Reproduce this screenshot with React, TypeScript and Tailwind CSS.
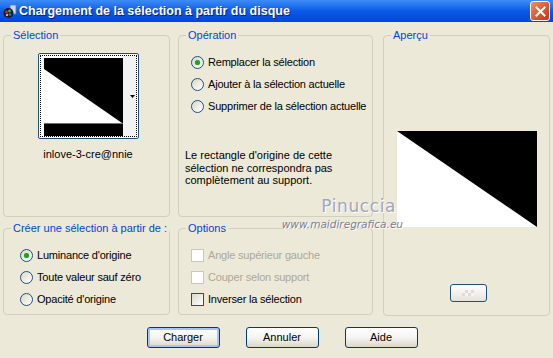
import React from "react";

const font = { fontFamily: '"Liberation Sans", Arial, sans-serif' };

function Radio({ checked, label }: { checked?: boolean; label: string }) {
  return (
    <div className="flex items-center h-[22px] gap-[4px]">
      <div className="w-[13px] h-[13px] rounded-full border border-[#1c5180] bg-linear-to-br from-[#dcd9c9] to-white flex items-center justify-center shrink-0">
        {checked && <div className="w-[5px] h-[5px] rounded-full bg-[#21a121] shadow-[0_0_1px_#5fd35f]" />}
      </div>
      <span className="text-[11px] text-black leading-[13px] tracking-[-0.2px] whitespace-nowrap">{label}</span>
    </div>
  );
}

function Check({ disabled, label }: { disabled?: boolean; label: string }) {
  return (
    <div className="flex items-center h-[22px] gap-[4px]">
      <div
        className={
          disabled
            ? "w-[13px] h-[13px] border border-[#cac8bb] bg-white shrink-0"
            : "w-[13px] h-[13px] border border-[#1c5180] bg-linear-to-br from-[#dcd9c9] to-white shrink-0"
        }
      />
      <span className={`text-[11px] leading-[13px] tracking-[-0.2px] whitespace-nowrap ${disabled ? "text-[#aca899]" : "text-black"}`}>
        {label}
      </span>
    </div>
  );
}

function Group({ title, className, children }: { title: string; className: string; children?: React.ReactNode }) {
  return (
    <fieldset className={`border border-[#d0d0bf] rounded-[4px] min-w-0 ${className}`}>
      <legend className="ml-[7px] px-[2px] text-[11px] leading-[14px] text-[#0046d5] whitespace-nowrap">{title}</legend>
      {children}
    </fieldset>
  );
}

function Btn({ label, def }: { label: string; def?: boolean }) {
  return (
    <button
      className={`w-[73px] h-[21px] rounded-[3px] border border-[#003c74] bg-linear-to-b from-white via-[#f4f4f0] to-[#dcd7cb] text-[11px] text-black ${
        def ? "shadow-[inset_0_0_0_2px_#a9c4f3]" : ""
      }`}
    >
      {label}
    </button>
  );
}

export default function App() {
  return (
    <div className="w-[553px] h-[358px] bg-[#ece9d8] relative overflow-hidden" style={font}>
      {/* title bar */}
      <div className="h-[22px] flex items-center bg-linear-to-b from-[#3d8cf7] via-[#0a5ae6] to-[#0046d8] pl-[2px] pr-[3px]">
        <svg width="15" height="15" viewBox="0 0 15 15" className="shrink-0">
          <rect x="8" y="1" width="6" height="9" fill="#c8d8f0" stroke="#5a78a8" strokeWidth="0.8" />
          <circle cx="6.5" cy="9" r="5" fill="#1a1a2a" />
          <circle cx="4.5" cy="8" r="1.4" fill="#e02020" />
          <circle cx="7.5" cy="7" r="1.4" fill="#20c040" />
          <circle cx="8" cy="10.5" r="1.4" fill="#2060ff" />
          <circle cx="5" cy="11" r="1.2" fill="#e0c020" />
        </svg>
        <span className="ml-[2px] text-white font-bold text-[12.5px] [text-shadow:1px_1px_0_#0a1e80]">
          Chargement de la sélection à partir du disque
        </span>
        <div className="ml-auto w-[20px] h-[20px] rounded-[3px] border border-white bg-linear-to-br from-[#f08a6c] via-[#e35a36] to-[#c0341a] flex items-center justify-center">
          <svg width="11" height="11" viewBox="0 0 11 11">
            <path d="M1.5 1.5 L9.5 9.5 M9.5 1.5 L1.5 9.5" stroke="white" strokeWidth="2" strokeLinecap="square" />
          </svg>
        </div>
      </div>

      {/* body */}
      <div className="flex gap-[8px] px-[3px] pt-[6px]">
        <div className="flex flex-col gap-[4px] w-[167px]">
          <Group title="Sélection" className="h-[189px]">
            <div className="flex flex-col items-center pt-[11px] pl-[3px]">
              <div className="w-[101px] h-[86px] rounded-[2px] border border-[#1c5180] bg-white p-[1px]">
                <div className="w-full h-full border border-dotted border-black flex">
                  <div className="w-[79px] h-[78px] ml-[3px] mt-[2px] flex flex-col">
                    <svg width="79" height="65" viewBox="0 0 79 65" className="block">
                      <rect width="79" height="65" fill="black" />
                      <polygon points="0,11 0,65 78,65" fill="white" />
                    </svg>
                    <div className="h-[13px] bg-black border-t border-[#707070]" />
                  </div>
                  <div className="flex-1 bg-[#f2f2f2] flex items-center justify-end pr-[1px]">
                    <svg width="5" height="3" viewBox="0 0 5 3">
                      <polygon points="0,0 5,0 2.5,3" fill="black" />
                    </svg>
                  </div>
                </div>
              </div>
              <div className="mt-[8px] text-[11px] leading-[14px] text-black">inlove-3-cre@nnie</div>
            </div>
          </Group>
          <Group title="Créer une sélection à partir de :" className="h-[94px]">
            <div className="pl-[16px] pt-[9px]">
              <Radio checked label="Luminance d'origine" />
              <Radio label="Toute valeur sauf zéro" />
              <Radio label="Opacité d'origine" />
            </div>
          </Group>
        </div>

        <div className="flex flex-col gap-[4px] w-[195px]">
          <Group title="Opération" className="h-[189px]">
            <div className="pl-[12px] pt-[9px]">
              <Radio checked label="Remplacer la sélection" />
              <Radio label="Ajouter à la sélection actuelle" />
              <Radio label="Supprimer de la sélection actuelle" />
            </div>
            <p className="pl-[6px] mt-[32px] text-[11px] leading-[12.5px] text-black">
              Le rectangle d'origine de cette
              <br />
              sélection ne correspondra pas
              <br />
              complètement au support.
            </p>
          </Group>
          <Group title="Options" className="h-[94px]">
            <div className="pl-[12px] pt-[9px]">
              <Check disabled label="Angle supérieur gauche" />
              <Check disabled label="Couper selon support" />
              <Check label="Inverser la sélection" />
            </div>
          </Group>
        </div>

        <div className="ml-[2px] w-[167px]">
          <Group title="Aperçu" className="h-[288px]">
            <div className="flex flex-col items-center pt-[89px]">
              <svg width="140" height="96" viewBox="0 0 140 96" className="block">
                <rect width="140" height="96" fill="black" />
                <polygon points="0,0 0,96 140,96" fill="white" />
              </svg>
              <div className="mt-[57px] ml-[3px] w-[37px] h-[18px] rounded-[3px] border border-[#1c5180] bg-linear-to-b from-white to-[#e6e3d8] flex items-center justify-center">
                <svg width="12" height="6" viewBox="0 0 12 6">
                  <rect width="12" height="6" fill="#f4f4f4" />
                  <rect x="0" y="3" width="3" height="3" fill="#dcdcdc" />
                  <rect x="3" y="0" width="3" height="3" fill="#dcdcdc" />
                  <rect x="6" y="3" width="3" height="3" fill="#dcdcdc" />
                  <rect x="9" y="0" width="3" height="3" fill="#dcdcdc" />
                </svg>
              </div>
            </div>
          </Group>
        </div>
      </div>

      {/* buttons */}
      <div className="flex justify-center gap-[26px] pl-[11px] mt-[11px]">
        <Btn label="Charger" def />
        <Btn label="Annuler" />
        <Btn label="Aide" />
      </div>

      {/* watermark */}
      <div className="absolute left-[281px] top-[198px] w-[122px] flex flex-col items-end pointer-events-none">
        <span className="mr-[7px] text-[17px] leading-[17px] text-[#a4a4bc] tracking-[0.6px] [text-shadow:1px_1px_0_#ffffff]" style={{ fontFamily: '"DejaVu Sans", sans-serif' }}>
          Pinuccia
        </span>
        <span className="mt-[4px] text-[10.5px] leading-[11px] italic text-[#7c7c94] [text-shadow:1px_1px_0_#ffffff]" style={{ fontFamily: '"DejaVu Sans", sans-serif' }}>
          www.maidiregrafica.eu
        </span>
      </div>
    </div>
  );
}
